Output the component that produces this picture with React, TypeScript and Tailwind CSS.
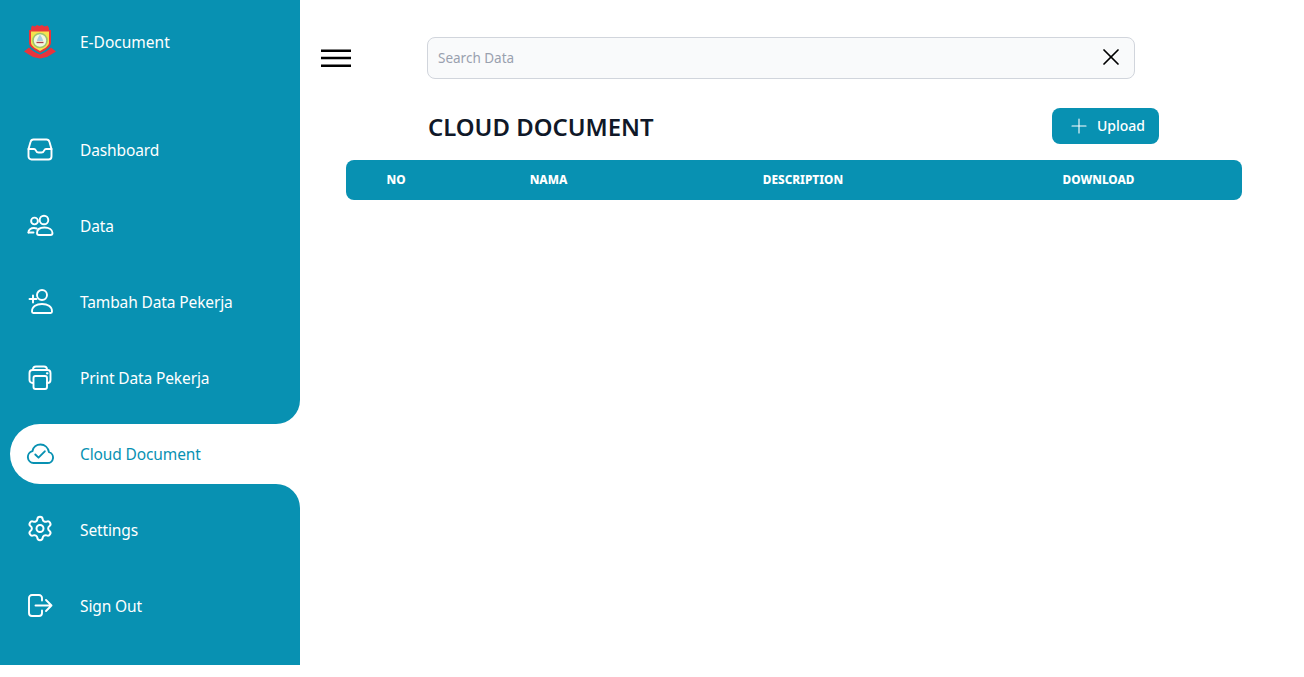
import { ReactNode } from 'react';
import { Plus, Settings, X } from 'lucide-react';

interface NavItem {
  label: string;
  icon: ReactNode;
  active?: boolean;
}

function Ico({ children }: { children: ReactNode }) {
  return (
    <svg
      width="28"
      height="28"
      viewBox="0 0 28 28"
      fill="none"
      stroke="currentColor"
      strokeWidth="1.9"
      strokeLinecap="round"
      strokeLinejoin="round"
    >
      {children}
    </svg>
  );
}

const items: NavItem[] = [
  {
    label: 'Dashboard',
    icon: (
      <Ico>
        <path d="M7.500 3.500h13a3 3 0 0 1 2.900 2.300L25.500 13v7.500a3 3 0 0 1-3 3h-17a3 3 0 0 1-3-3V13l2.100-7.200a3 3 0 0 1 2.900-2.300z" />
        <path d="M2.500 13h5.500c.9 0 1.400.5 1.800 1.300.5 1.300 1.300 2.200 2.700 2.200h3c1.400 0 2.200-.9 2.700-2.200.4-.8.9-1.300 1.800-1.300h5.500" />
      </Ico>
    ),
  },
  {
    label: 'Data',
    icon: (
      <Ico>
        <circle cx="8.500" cy="9" r="3.400" />
        <circle cx="18" cy="8" r="4.300" />
        <path d="M2.500 20.500c-.2-2.800 2.400-4.500 5.500-4.500 1 0 1.900.2 2.700.5" />
        <path d="M2.500 20.500h5" />
        <path d="M11 21c0-3.500 3-5.500 7.500-5.500S26.500 17.500 26.500 21c0 1.200-.8 2-2 2H13c-1.200 0-2-.8-2-2z" />
      </Ico>
    ),
  },
  {
    label: 'Tambah Data Pekerja',
    icon: (
      <Ico>
        <circle cx="16" cy="7" r="5" />
        <path d="M6 23.500c0-5 4.500-7.500 10-7.500s10 2.500 10 7.500c0 .9-.5 1.500-1.300 1.500H7.300C6.500 25 6 24.400 6 23.500z" />
        <path d="M3.500 11h7M7 7.500v7" />
      </Ico>
    ),
  },
  {
    label: 'Print Data Pekerja',
    icon: (
      <Ico>
        <path d="M7 6v-.500a3 3 0 0 1 3-3h8a3 3 0 0 1 3 3V6" />
        <path d="M7 19H6.500a3 3 0 0 1-3-3V9a3 3 0 0 1 3-3h15a3 3 0 0 1 3 3v7a3 3 0 0 1-3 3H21" />
        <rect x="7.500" y="12" width="13.500" height="13" rx="2" />
        <path d="M21 9.300h.4" strokeWidth="2.200" />
      </Ico>
    ),
  },
  {
    label: 'Cloud Document',
    active: true,
    icon: (
      <Ico>
        <path d="M7.500 23h14a5.500 5.500 0 0 0 1.500-10.800C22.200 7.500 18.700 4.500 14.500 4.500c-4 0-7.300 2.700-8.100 6.700A6 6 0 0 0 7.500 23z" />
        <path d="M9.300 14.500l3.200 3.200 6.300-6.400" />
      </Ico>
    ),
  },
  {
    label: 'Settings',
    icon: <Settings size={29} strokeWidth={1.700} className="-mt-[3px]" />,
  },
  {
    label: 'Sign Out',
    icon: (
      <Ico>
        <path d="M16 8.500V6a3 3 0 0 0-3-3H6a3 3 0 0 0-3 3v15a3 3 0 0 0 3 3h7a3 3 0 0 0 3-3v-2.500" />
        <path d="M9.500 13.500h16M20 8l5.500 5.500-5.500 5.500" />
      </Ico>
    ),
  },
];

function Logo() {
  return (
    <svg width="32" height="36" viewBox="0 0 32 36">
      <path d="M7 4l1-2.500 3 1 2-1.500 2.500 1L18 1l2.500 1.500 3-1L25 4v3H7z" fill="#e8343c" />
      <path d="M5 6h22v12.500C27 23 21 26.500 16 29 11 26.500 5 23 5 18.500z" fill="#e8343c" />
      <path d="M7 7.500h18v11C25 22 20.500 24.500 16 27c-4.500-2.500-9-5-9-8.500z" fill="#f6e14e" />
      <circle cx="16" cy="16.500" r="7" fill="#f4f6e0" stroke="#9cc46e" strokeWidth="1.600" />
      <path d="M16 10.500c1.500 2.500 3 4.500 3 6.500h-6c0-2 1.500-4 3-6.500z" fill="#a8cfdf" />
      <path d="M12.500 18.500h7" stroke="#a9414a" strokeWidth="1.300" />
      <path d="M0 27.500l5-4c3 3.500 7 5.500 11 7 4-1.500 8-3.500 11-7l5 4-4 2.500-5 3-7 1.500-7-1.500-5-3z" fill="#e8343c" />
    </svg>
  );
}

function SideLink({ item }: { item: NavItem }) {
  if (item.active) {
    return (
      <div className="relative h-[60px] pl-[10px]">
        <div className="absolute right-0 top-[-24px] h-6 w-6 bg-white">
          <div className="h-6 w-6 rounded-br-3xl bg-[#0891b2]" />
        </div>
        <div className="flex h-[60px] items-center rounded-l-[30px] bg-white pl-4 text-[#0891b2]">
          <span className="flex w-7 justify-center">{item.icon}</span>
          <span className="ml-[26px] pt-px text-[15.500px] tracking-[-0.12px]">{item.label}</span>
        </div>
        <div className="absolute bottom-[-24px] right-0 h-6 w-6 bg-white">
          <div className="h-6 w-6 rounded-tr-3xl bg-[#0891b2]" />
        </div>
      </div>
    );
  }
  return (
    <div className="flex h-[60px] items-center pl-[26px] text-white">
      <span className="flex w-7 justify-center">{item.icon}</span>
      <span className="ml-[26px] pt-px text-[15.500px] tracking-[-0.12px]">{item.label}</span>
    </div>
  );
}

export default function App() {
  return (
    <div className="flex h-[677px] w-[1304px] overflow-hidden bg-white font-['Noto_Sans',sans-serif]">
      <aside className="h-[665px] w-[300px] shrink-0 bg-[#0891b2]">
        <div className="flex h-[120px] items-start pl-6 pt-6 text-white">
          <Logo />
          <span className="ml-6 mt-[7px] text-[15.500px]">E-Document</span>
        </div>
        <nav className="flex flex-col gap-4">
          {items.map((item) => (
            <SideLink key={item.label} item={item} />
          ))}
        </nav>
      </aside>

      <main className="flex-1 pl-[46px] pr-[62px]">
        <div className="flex h-[108px] items-start">
          <svg width="30" height="20" viewBox="0 0 30 20" className="ml-[-25px] mt-[48px] shrink-0" stroke="#000" strokeWidth="2.600">
            <path d="M0 2.800h30M0 10h30M0 17.800h30" />
          </svg>
          <div className="ml-[76px] mt-[37px] flex h-[42px] w-[708px] items-center justify-between rounded-lg border border-gray-300 bg-gray-50 pl-[10px] pr-[9px]">
            <span className="text-[13.500px] text-gray-400">Search Data</span>
            <X size={28} strokeWidth={1.500} className="-mt-[2px] text-black" />
          </div>
        </div>

        <div className="flex h-[52px] items-start">
          <h1 className="ml-[82px] mt-[3px] text-[23.900px] font-semibold leading-8 text-gray-900">CLOUD DOCUMENT</h1>
          <button className="ml-auto mr-[83px] flex h-9 w-[107px] items-center justify-center gap-[6px] rounded-lg bg-[#0891b2] pl-px text-sm font-medium text-white">
            <Plus size={24} strokeWidth={1.100} />
            Upload
          </button>
        </div>

        <div className="grid h-10 w-[896px] grid-cols-[100px_205px_304px_287px] items-center rounded-lg bg-[#0891b2] text-center text-[11.800px] font-extrabold uppercase text-white">
          <span>No</span>
          <span>Nama</span>
          <span>Description</span>
          <span>Download</span>
        </div>
      </main>
    </div>
  );
}
